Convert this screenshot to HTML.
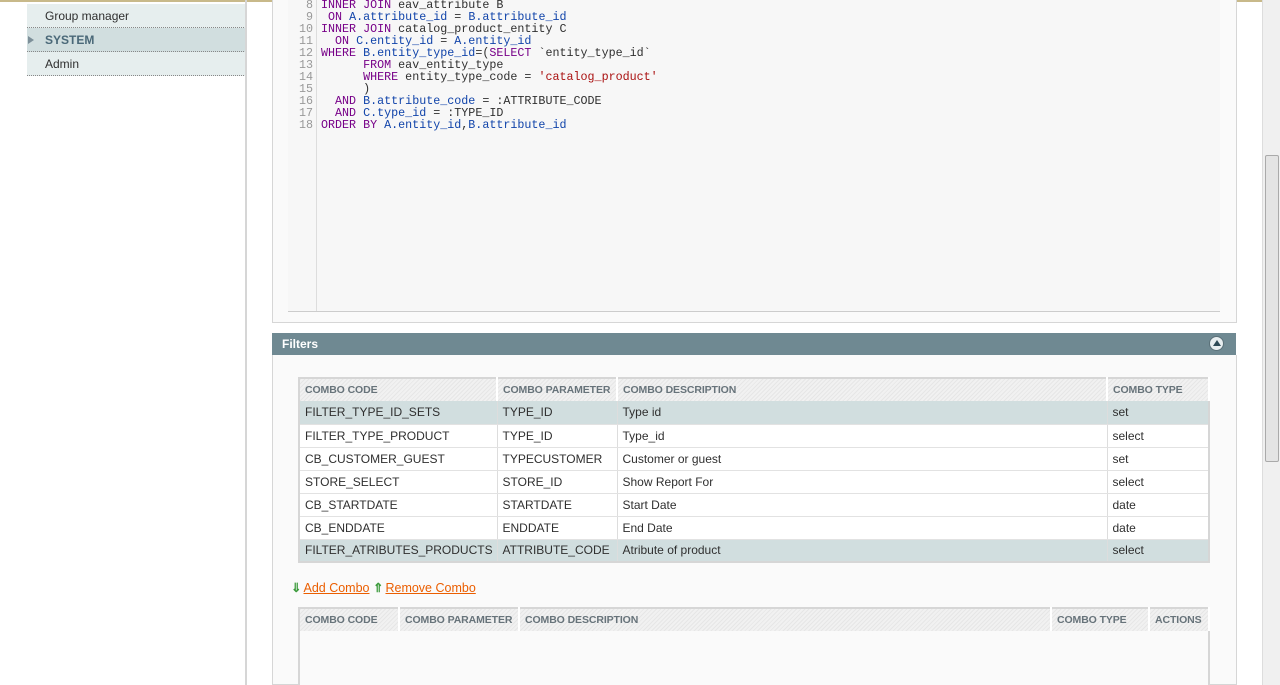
<!DOCTYPE html>
<html><head><style>
*{margin:0;padding:0;box-sizing:border-box}
body{width:1280px;height:685px;overflow:hidden;background:#fff;font-family:"Liberation Sans",Arial,sans-serif;font-size:12px;color:#2f2f2f;position:relative}
.topline{position:absolute;left:0;top:0;width:1262px;height:2px;background:#c8b98a}
.nav{position:absolute;left:27px;top:4px;width:219px}
.nav div{height:24px;line-height:24px;padding-left:18px;background:#e6eeee;border-bottom:1px dotted #888;font-size:12px}
.nav .sys{background:#d1dedf;font-weight:bold;color:#4a6878;position:relative}
.nav .sys:before{content:"";position:absolute;left:1px;top:8px;border-left:6px solid #7d8f99;border-top:4px solid transparent;border-bottom:4px solid transparent}
.vline{position:absolute;left:245px;top:0;width:2px;height:685px;background:#d6d6d6}
.panel{position:absolute;left:272px;top:0;width:965px;height:323px;border:1px solid #d6d6d6;border-top:none;background:#fafafa}
.code{position:absolute;left:288px;top:0;width:932px;height:312px;border-bottom:1px solid #ccc;background:#f7f7f7}
.gut{position:absolute;left:0;top:0;width:29px;height:311px;border-right:1px solid #ddd;background:#f7f7f7}
pre{font-family:"Liberation Mono",monospace;font-size:11.7px;line-height:12px;position:absolute;top:-1px}
.ln{right:3px;color:#999;text-align:right;left:0;width:25px}
.k{color:#708}.s{color:#a11}.v{color:#14a}
.fh{position:absolute;left:272px;top:333px;width:964px;height:22px;background:#6f8992;color:#fff;font-weight:bold;line-height:22px;padding-left:10px}
.fh i{position:absolute;right:12px;top:3px;width:15px;height:15px;border-radius:50%;background:#e8eef0;border:1px solid #5a7078}
.fh i:after{content:"";position:absolute;left:3px;top:3px;border-bottom:6px solid #2d4a56;border-left:4px solid transparent;border-right:4px solid transparent}
.fb{position:absolute;left:272px;top:355px;width:965px;height:330px;border:1px solid #d6d6d6;border-top:none;background:#fafafa}
table{border-collapse:collapse;position:absolute;background:#fff;table-layout:fixed}
.t1{left:298px;top:377px;width:912px;border:2px solid #d6d6d6}
th{height:23px;text-align:left;font-size:10.5px;color:#67737a;padding-left:5px;background:repeating-linear-gradient(135deg,#e6e6e6 0 1px,#f1f1f1 1px 3px);border-right:2px solid #fff;font-weight:bold;white-space:nowrap;overflow:hidden;letter-spacing:-0.1px}
td{height:23px;padding-left:5px;border-right:1px solid #ddd;border-bottom:1px solid #e2e2e2;font-size:12px;white-space:nowrap;overflow:hidden}
tr.h td{background:#d1dedf}
.links{position:absolute;left:291px;top:580px;font-size:12.5px}
.links a{color:#eb5e00;text-decoration:underline}
.ar{display:inline-block;color:#3a9a3a;font-weight:bold;margin-right:2px}
.t2{left:298px;top:607px;width:912px;height:78px;border:2px solid #d6d6d6;border-bottom:none;background:#fafafa}
.sb{position:absolute;left:1262px;top:0;width:18px;height:685px;background:#f0f0f0;border-left:1px solid #ddd}
.th{position:absolute;left:2px;top:155px;width:14px;height:307px;background:#e4e4e4;border:1px solid #aaa;border-radius:2px}
</style></head><body>
<div class="topline"></div>
<div class="nav"><div>Group manager</div><div class="sys">SYSTEM</div><div>Admin</div></div>
<div class="vline"></div>
<div class="panel"></div>
<div class="code"><div class="gut"><pre class="ln"> 8
 9
10
11
12
13
14
15
16
17
18</pre></div>
<pre style="left:33px"><span class="k">INNER JOIN</span> eav_attribute B
 <span class="k">ON</span> <span class="v">A.attribute_id</span> = <span class="v">B.attribute_id</span>
<span class="k">INNER JOIN</span> catalog_product_entity C
  <span class="k">ON</span> <span class="v">C.entity_id</span> = <span class="v">A.entity_id</span>
<span class="k">WHERE</span> <span class="v">B.entity_type_id</span>=(<span class="k">SELECT</span> `entity_type_id`
      <span class="k">FROM</span> eav_entity_type
      <span class="k">WHERE</span> entity_type_code = <span class="s">'catalog_product'</span>
      )
  <span class="k">AND</span> <span class="v">B.attribute_code</span> = :ATTRIBUTE_CODE
  <span class="k">AND</span> <span class="v">C.type_id</span> = :TYPE_ID
<span class="k">ORDER BY</span> <span class="v">A.entity_id</span>,<span class="v">B.attribute_id</span></pre></div>
<div class="fh">Filters<i></i></div>
<div class="fb"></div>
<table class="t1">
<colgroup><col style="width:198px"><col style="width:120px"><col style="width:490px"><col></colgroup>
<tr><th>COMBO CODE</th><th>COMBO PARAMETER</th><th>COMBO DESCRIPTION</th><th>COMBO TYPE</th></tr>
<tr class="h"><td>FILTER_TYPE_ID_SETS</td><td>TYPE_ID</td><td>Type id</td><td>set</td></tr>
<tr><td>FILTER_TYPE_PRODUCT</td><td>TYPE_ID</td><td>Type_id</td><td>select</td></tr>
<tr><td>CB_CUSTOMER_GUEST</td><td>TYPECUSTOMER</td><td>Customer or guest</td><td>set</td></tr>
<tr><td>STORE_SELECT</td><td>STORE_ID</td><td>Show Report For</td><td>select</td></tr>
<tr><td>CB_STARTDATE</td><td>STARTDATE</td><td>Start Date</td><td>date</td></tr>
<tr><td>CB_ENDDATE</td><td>ENDDATE</td><td>End Date</td><td>date</td></tr>
<tr class="h"><td>FILTER_ATRIBUTES_PRODUCTS</td><td>ATTRIBUTE_CODE</td><td>Atribute of product</td><td>select</td></tr>
</table>
<div class="links"><span class="ar">⇓</span><a>Add Combo</a> <span class="ar">⇑</span><a>Remove Combo</a></div>
<table class="t2"><colgroup><col style="width:100px"><col style="width:120px"><col style="width:532px"><col style="width:98px"><col></colgroup><tr><th>COMBO CODE</th><th>COMBO PARAMETER</th><th>COMBO DESCRIPTION</th><th>COMBO TYPE</th><th>ACTIONS</th></tr><tr><td colspan="5" style="border:none;background:#fafafa;height:53px"></td></tr></table>
<div class="sb"><div class="th"></div></div>
</body></html>
